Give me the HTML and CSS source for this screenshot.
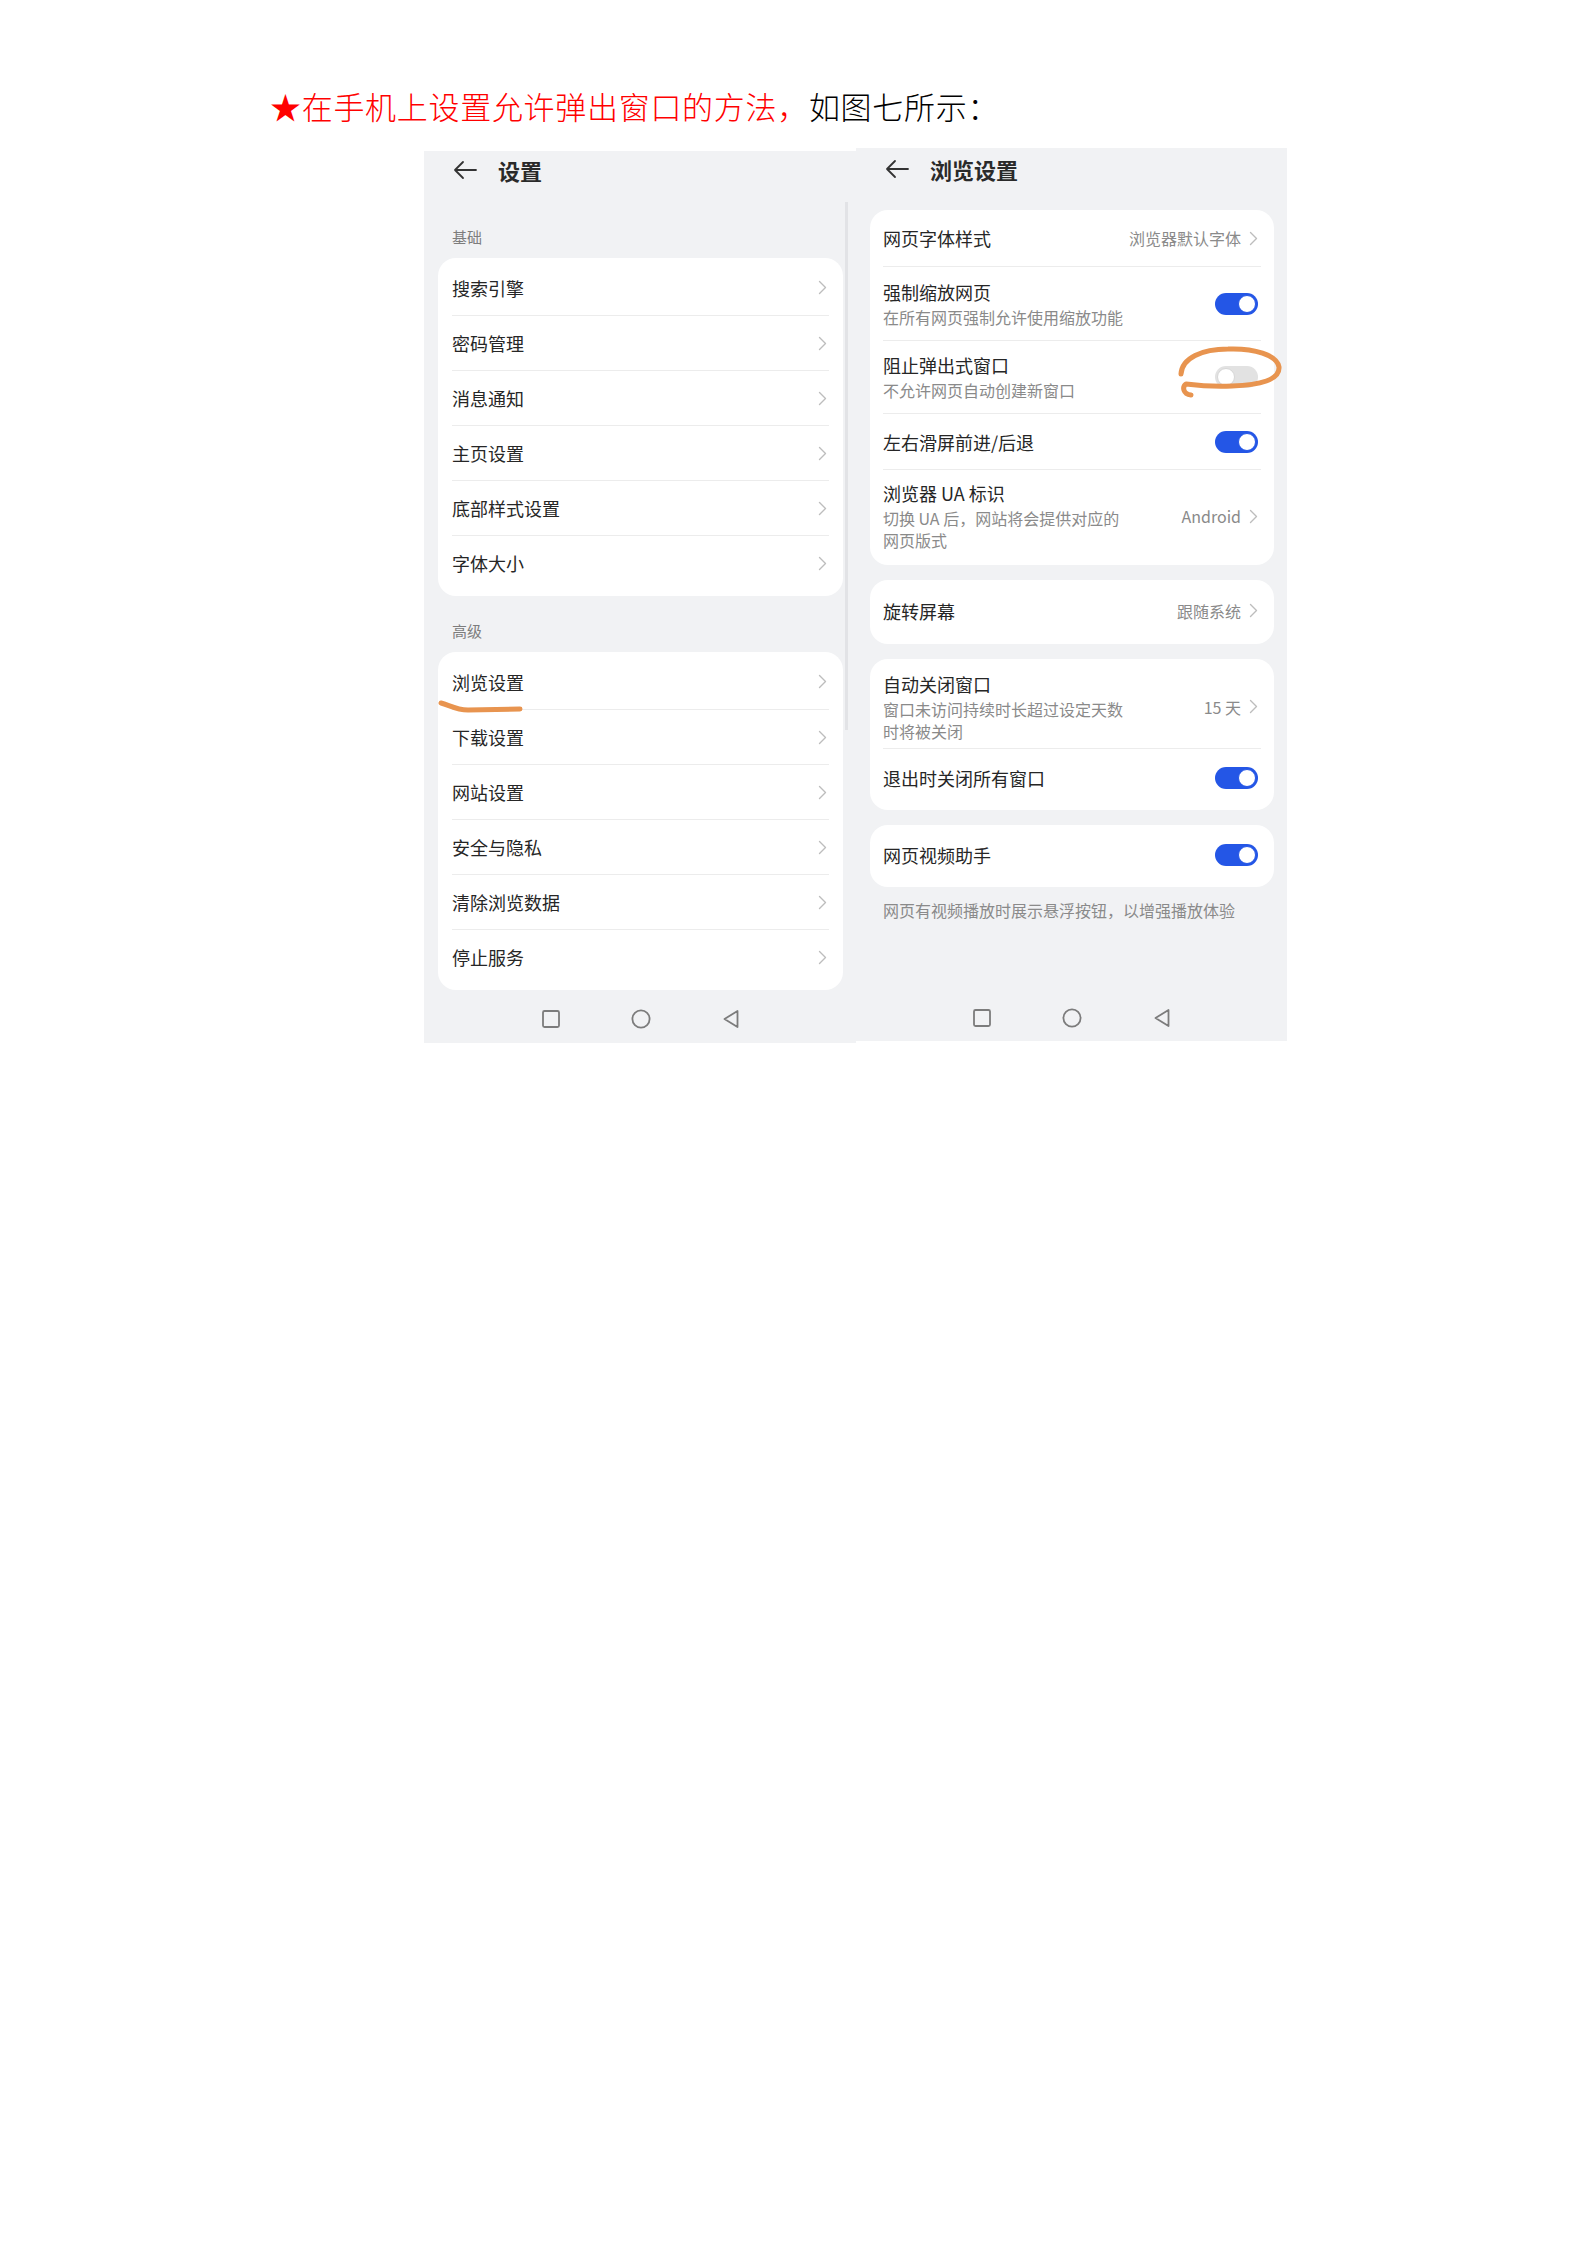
FILE: index.html
```html
<!DOCTYPE html>
<html lang="zh-CN">
<head>
    <meta charset="UTF-8">
    <meta name="viewport" content="width=device-width, initial-scale=1.0">
    <title>允许弹出窗口设置</title>
    <link rel="stylesheet" href="styles.css">
</head>
<body>
    <p class="caption"><span class="red">★在手机上设置允许弹出窗口的方法，</span>如图七所示：</p>

    <div class="figure">
        <!-- 左图：设置 -->
        <section class="phone phone-left">
            <header class="bar">
                <svg class="back" viewBox="0 0 24 20"><path d="M23 10H2M10 2L2 10l8 8" fill="none" stroke="#333" stroke-width="1.8" stroke-linecap="round" stroke-linejoin="round"/></svg>
                <h2>设置</h2>
            </header>

            <div class="group-label">基础</div>
            <div class="card card-list">
                <div class="item"><span class="name">搜索引擎</span><svg class="chev" viewBox="0 0 9 15"><path d="M1.5 1.5l6 6-6 6" fill="none" stroke="#bdbdbd" stroke-width="1.4" stroke-linecap="round" stroke-linejoin="round"/></svg></div>
                <div class="item"><span class="name">密码管理</span><svg class="chev" viewBox="0 0 9 15"><path d="M1.5 1.5l6 6-6 6" fill="none" stroke="#bdbdbd" stroke-width="1.4" stroke-linecap="round" stroke-linejoin="round"/></svg></div>
                <div class="item"><span class="name">消息通知</span><svg class="chev" viewBox="0 0 9 15"><path d="M1.5 1.5l6 6-6 6" fill="none" stroke="#bdbdbd" stroke-width="1.4" stroke-linecap="round" stroke-linejoin="round"/></svg></div>
                <div class="item"><span class="name">主页设置</span><svg class="chev" viewBox="0 0 9 15"><path d="M1.5 1.5l6 6-6 6" fill="none" stroke="#bdbdbd" stroke-width="1.4" stroke-linecap="round" stroke-linejoin="round"/></svg></div>
                <div class="item"><span class="name">底部样式设置</span><svg class="chev" viewBox="0 0 9 15"><path d="M1.5 1.5l6 6-6 6" fill="none" stroke="#bdbdbd" stroke-width="1.4" stroke-linecap="round" stroke-linejoin="round"/></svg></div>
                <div class="item"><span class="name">字体大小</span><svg class="chev" viewBox="0 0 9 15"><path d="M1.5 1.5l6 6-6 6" fill="none" stroke="#bdbdbd" stroke-width="1.4" stroke-linecap="round" stroke-linejoin="round"/></svg></div>
            </div>

            <div class="group-label">高级</div>
            <div class="card card-list">
                <div class="item"><span class="name">浏览设置</span><svg class="chev" viewBox="0 0 9 15"><path d="M1.5 1.5l6 6-6 6" fill="none" stroke="#bdbdbd" stroke-width="1.4" stroke-linecap="round" stroke-linejoin="round"/></svg></div>
                <div class="item"><span class="name">下载设置</span><svg class="chev" viewBox="0 0 9 15"><path d="M1.5 1.5l6 6-6 6" fill="none" stroke="#bdbdbd" stroke-width="1.4" stroke-linecap="round" stroke-linejoin="round"/></svg></div>
                <div class="item"><span class="name">网站设置</span><svg class="chev" viewBox="0 0 9 15"><path d="M1.5 1.5l6 6-6 6" fill="none" stroke="#bdbdbd" stroke-width="1.4" stroke-linecap="round" stroke-linejoin="round"/></svg></div>
                <div class="item"><span class="name">安全与隐私</span><svg class="chev" viewBox="0 0 9 15"><path d="M1.5 1.5l6 6-6 6" fill="none" stroke="#bdbdbd" stroke-width="1.4" stroke-linecap="round" stroke-linejoin="round"/></svg></div>
                <div class="item"><span class="name">清除浏览数据</span><svg class="chev" viewBox="0 0 9 15"><path d="M1.5 1.5l6 6-6 6" fill="none" stroke="#bdbdbd" stroke-width="1.4" stroke-linecap="round" stroke-linejoin="round"/></svg></div>
                <div class="item"><span class="name">停止服务</span><svg class="chev" viewBox="0 0 9 15"><path d="M1.5 1.5l6 6-6 6" fill="none" stroke="#bdbdbd" stroke-width="1.4" stroke-linecap="round" stroke-linejoin="round"/></svg></div>
            </div>

            <nav class="nav">
                <svg viewBox="0 0 20 20"><rect x="2" y="2" width="16" height="16" rx="1.5" fill="none" stroke="#7c7c7c" stroke-width="1.8"/></svg>
                <svg viewBox="0 0 20 20"><circle cx="10" cy="10" r="8.6" fill="none" stroke="#7c7c7c" stroke-width="1.8"/></svg>
                <svg viewBox="0 0 20 20"><path d="M16.5 2v16L3.5 10z" fill="none" stroke="#7c7c7c" stroke-width="1.8" stroke-linejoin="round"/></svg>
            </nav>

            <div class="scrollbar"></div>
            <svg class="mark-underline" viewBox="0 0 90 20"><path d="M5 6C13 8 20 13 32 13L84 12" fill="none" stroke="#e8944f" stroke-width="5" stroke-linecap="round"/></svg>
        </section>

        <!-- 右图：浏览设置 -->
        <section class="phone phone-right">
            <header class="bar bar-right">
                <svg class="back" viewBox="0 0 24 20"><path d="M23 10H2M10 2L2 10l8 8" fill="none" stroke="#333" stroke-width="1.8" stroke-linecap="round" stroke-linejoin="round"/></svg>
                <h2>浏览设置</h2>
            </header>

            <div class="card">
                <div class="row h56">
                    <div class="text"><div class="name">网页字体样式</div></div>
                    <div class="value">浏览器默认字体<svg class="chev" viewBox="0 0 9 15"><path d="M1.5 1.5l6 6-6 6" fill="none" stroke="#bdbdbd" stroke-width="1.4" stroke-linecap="round" stroke-linejoin="round"/></svg></div>
                </div>
                <div class="row h74">
                    <div class="text"><div class="name">强制缩放网页</div><div class="desc">在所有网页强制允许使用缩放功能</div></div>
                    <span class="switch on"></span>
                </div>
                <div class="row h73">
                    <div class="text"><div class="name">阻止弹出式窗口</div><div class="desc">不允许网页自动创建新窗口</div></div>
                    <span class="switch"></span>
                </div>
                <div class="row h56">
                    <div class="text"><div class="name">左右滑屏前进/后退</div></div>
                    <span class="switch on"></span>
                </div>
                <div class="row h93">
                    <div class="text"><div class="name">浏览器 UA 标识</div><div class="desc narrow">切换 UA 后，网站将会提供对应的网页版式</div></div>
                    <div class="value">Android<svg class="chev" viewBox="0 0 9 15"><path d="M1.5 1.5l6 6-6 6" fill="none" stroke="#bdbdbd" stroke-width="1.4" stroke-linecap="round" stroke-linejoin="round"/></svg></div>
                </div>
            </div>

            <div class="card">
                <div class="row h61">
                    <div class="text"><div class="name">旋转屏幕</div></div>
                    <div class="value">跟随系统<svg class="chev" viewBox="0 0 9 15"><path d="M1.5 1.5l6 6-6 6" fill="none" stroke="#bdbdbd" stroke-width="1.4" stroke-linecap="round" stroke-linejoin="round"/></svg></div>
                </div>
            </div>

            <div class="card">
                <div class="row h89 top-pad">
                    <div class="text"><div class="name">自动关闭窗口</div><div class="desc narrow">窗口未访问持续时长超过设定天数时将被关闭</div></div>
                    <div class="value">15 天<svg class="chev" viewBox="0 0 9 15"><path d="M1.5 1.5l6 6-6 6" fill="none" stroke="#bdbdbd" stroke-width="1.4" stroke-linecap="round" stroke-linejoin="round"/></svg></div>
                </div>
                <div class="row h59">
                    <div class="text"><div class="name">退出时关闭所有窗口</div></div>
                    <span class="switch on"></span>
                </div>
            </div>

            <div class="card">
                <div class="row h59">
                    <div class="text"><div class="name">网页视频助手</div></div>
                    <span class="switch on"></span>
                </div>
            </div>

            <p class="footnote">网页有视频播放时展示悬浮按钮，以增强播放体验</p>

            <nav class="nav nav-right">
                <svg viewBox="0 0 20 20"><rect x="2" y="2" width="16" height="16" rx="1.5" fill="none" stroke="#7c7c7c" stroke-width="1.8"/></svg>
                <svg viewBox="0 0 20 20"><circle cx="10" cy="10" r="8.6" fill="none" stroke="#7c7c7c" stroke-width="1.8"/></svg>
                <svg viewBox="0 0 20 20"><path d="M16.5 2v16L3.5 10z" fill="none" stroke="#7c7c7c" stroke-width="1.8" stroke-linejoin="round"/></svg>
            </nav>

            <svg class="mark-circle" viewBox="0 0 118 56"><path d="M9 31C10 15 30 6 56 6C82 5 105 12 107 24C108 37 88 42 60 43C38 44 22 42 14 41C10 44 11 51 19 52" fill="none" stroke="#e8944f" stroke-width="5" stroke-linecap="round" stroke-linejoin="round"/></svg>
        </section>
    </div>
</body>
</html>
```

FILE: styles.css
```css
body {
    margin: 0;
    background: #fff;
    font-family: "Noto Sans CJK SC", "Noto Sans", sans-serif;
    color: #000;
}
.caption {
    margin: 86px 0 0 270px;
    font-size: 31px;
    line-height: 40px;
    letter-spacing: 0.7px;
    font-weight: 300;
}
.red {
    color: #ff0000;
}
.figure {
    display: flex;
    align-items: flex-start;
    margin: 22px 0 0 424px;
}
.phone {
    position: relative;
    display: flex;
    flex-direction: column;
    background: #f1f2f4;
    padding: 0 13px 0 14px;
    box-sizing: border-box;
    color: #262626;
}
.phone-left {
    width: 432px;
    height: 892px;
    margin-top: 3px;
}
.phone-right {
    width: 431px;
    height: 893px;
}
.bar {
    display: flex;
    align-items: center;
    height: 38px;
    margin-bottom: 13px;
    padding-left: 15px;
}
.bar-right {
    height: 42px;
    margin-bottom: 20px;
}
.back {
    width: 24px;
    height: 20px;
    margin-right: 21px;
}
.bar h2 {
    margin: 0;
    font-size: 22px;
    font-weight: 700;
    color: #2a2a2a;
}
.group-label {
    padding: 25px 0 11px 14px;
    font-size: 15px;
    line-height: 20px;
    color: #7d7d7d;
}
.card {
    background: #fff;
    border-radius: 18px;
    padding-bottom: 3px;
}
.card + .card {
    margin-top: 15px;
}
.card-list {
    padding: 2px 0 6px;
}
.item {
    display: flex;
    align-items: center;
    justify-content: space-between;
    height: 55px;
    margin: 0 14px;
    padding-right: 2px;
    box-sizing: border-box;
    font-size: 18px;
}
.item + .item {
    border-top: 1px solid #ececec;
}
.chev {
    width: 9px;
    height: 15px;
    flex: none;
}
.row {
    display: flex;
    align-items: center;
    justify-content: space-between;
    margin: 0 13px;
    padding-right: 3px;
    box-sizing: border-box;
}
.row + .row {
    border-top: 1px solid #ececec;
}
.h56 { height: 56px; }
.h59 { height: 59px; }
.h61 { height: 61px; }
.h73 { height: 73px; }
.h74 { height: 74px; }
.h89 { height: 89px; }
.h93 { height: 93px; }
.top-pad {
    padding-top: 6px;
}
.name {
    font-size: 18px;
    line-height: 24px;
}
.desc {
    margin-top: 2px;
    font-size: 16px;
    line-height: 22px;
    color: #8a8a8a;
}
.narrow {
    width: 250px;
}
.value {
    display: flex;
    align-items: center;
    gap: 8px;
    font-size: 16px;
    color: #8a8a8a;
    white-space: nowrap;
}
.switch {
    position: relative;
    flex: none;
    width: 43px;
    height: 22px;
    border-radius: 11px;
    background: #e2e2e2;
}
.switch::after {
    content: "";
    position: absolute;
    top: 2px;
    left: 2px;
    width: 16px;
    height: 16px;
    border-radius: 50%;
    background: #fff;
    border: 1px solid #d6d6d6;
}
.switch.on {
    background: #2456e6;
}
.switch.on::after {
    left: auto;
    right: 2px;
    border-color: #2456e6;
}
.footnote {
    margin: 12px 0 0 13px;
    font-size: 16px;
    line-height: 22px;
    color: #8a8a8a;
}
.nav {
    display: flex;
    justify-content: center;
    align-items: center;
    gap: 70px;
    height: 48px;
    margin-top: auto;
}
.nav-right {
    height: 46px;
}
.nav svg {
    width: 20px;
    height: 20px;
}
.scrollbar {
    position: absolute;
    left: 421px;
    top: 51px;
    width: 3px;
    height: 528px;
    background: #e2e3e6;
}
.mark-underline {
    position: absolute;
    left: 12px;
    top: 546px;
    width: 90px;
    height: 20px;
}
.mark-circle {
    position: absolute;
    left: 316px;
    top: 195px;
    width: 118px;
    height: 56px;
    overflow: visible;
}
```
